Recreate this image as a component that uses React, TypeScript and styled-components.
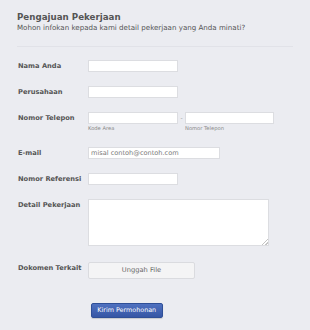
import styled, { createGlobalStyle } from "styled-components";

const GlobalStyle = createGlobalStyle`
  body {
    margin: 0;
    background: #ebecf1;
    font-family: "DejaVu Sans", Verdana, sans-serif;
  }
`;

const Page = styled.div`
  width: 310px;
  height: 330px;
  overflow: hidden;
  background: #ebecf1;
`;

const Header = styled.div`
  margin: 0 17px;
  padding-top: 11px;
  padding-bottom: 13px;
  border-bottom: 1px solid #e1e2e8;
`;

const Title = styled.h1`
  margin: 0;
  font-size: 8.7px;
  line-height: 12px;
  font-weight: bold;
  color: #555;
`;

const Subtitle = styled.p`
  margin: 0;
  font-size: 7.1px;
  line-height: 10px;
  color: #555;
`;

const Form = styled.form`
  padding: 13px 0 0 18px;
`;

const Row = styled.div<{ $space?: number }>`
  display: flex;
  align-items: flex-start;
  margin-bottom: ${({ $space }) => $space ?? 14}px;
`;

const Label = styled.label`
  width: 70px;
  flex-shrink: 0;
  font-size: 6.7px;
  line-height: 12px;
  font-weight: bold;
  color: #555;
`;

const Input = styled.input<{ $width?: number }>`
  box-sizing: border-box;
  width: ${({ $width }) => $width ?? 90}px;
  height: 12px;
  margin: 0;
  padding: 0 2px;
  border: 1px solid #dcdde1;
  background: #fff;
  font-family: inherit;
  font-size: 6.6px;
  color: #555;
  outline: none;

  &::placeholder {
    color: #7a7a7a;
  }
`;

const PhoneGroup = styled.div`
  display: flex;
  align-items: flex-start;
`;

const PhoneField = styled.div`
  display: flex;
  flex-direction: column;
`;

const Dash = styled.span`
  width: 7px;
  text-align: center;
  font-size: 6px;
  line-height: 12px;
  color: #999;
`;

const SubLabel = styled.span`
  margin-top: 1px;
  font-size: 5.2px;
  line-height: 7px;
  color: #888;
`;

const TextArea = styled.textarea`
  box-sizing: border-box;
  width: 181px;
  height: 47px;
  margin: 0;
  padding: 2px;
  border: 1px solid #dcdde1;
  background: #fff;
  font-family: inherit;
  font-size: 6.6px;
  outline: none;

  &::-webkit-resizer {
    background: linear-gradient(
      135deg,
      transparent 78%,
      #c4c4c4 78%,
      #c4c4c4 83%,
      transparent 83%,
      transparent 89%,
      #c4c4c4 89%,
      #c4c4c4 94%,
      transparent 94%
    );
  }
`;

const UploadButton = styled.button`
  box-sizing: border-box;
  width: 107px;
  height: 16.5px;
  margin: 0;
  padding: 0;
  border: 1px solid #dadbdf;
  border-radius: 2px;
  background: #f4f4f5;
  font-family: inherit;
  font-size: 6.7px;
  color: #666;
`;

const SubmitRow = styled.div`
  display: flex;
  padding-left: 73px;
`;

const SubmitButton = styled.button`
  box-sizing: border-box;
  width: 71.5px;
  height: 14.5px;
  margin: 0;
  padding: 0;
  border: 1px solid #2f4f97;
  border-radius: 2px;
  background: linear-gradient(#4f71c0, #3656a5);
  box-shadow: 0 1px 1px rgba(0, 0, 0, 0.15);
  font-family: inherit;
  font-size: 6.4px;
  color: #fff;
`;

export default function App() {
  return (
    <Page>
      <GlobalStyle />
      <Header>
        <Title>Pengajuan Pekerjaan</Title>
        <Subtitle>Mohon infokan kepada kami detail pekerjaan yang Anda minati?</Subtitle>
      </Header>

      <Form onSubmit={(e) => e.preventDefault()}>
        <Row>
          <Label>Nama Anda</Label>
          <Input type="text" />
        </Row>
        <Row>
          <Label>Perusahaan</Label>
          <Input type="text" />
        </Row>
        <Row $space={15}>
          <Label>Nomor Telepon</Label>
          <PhoneGroup>
            <PhoneField>
              <Input type="text" />
              <SubLabel>Kode Area</SubLabel>
            </PhoneField>
            <Dash>-</Dash>
            <PhoneField>
              <Input type="text" $width={89} />
              <SubLabel>Nomor Telepon</SubLabel>
            </PhoneField>
          </PhoneGroup>
        </Row>
        <Row>
          <Label>E-mail</Label>
          <Input type="text" $width={132} placeholder="misal contoh@contoh.com" />
        </Row>
        <Row>
          <Label>Nomor Referensi</Label>
          <Input type="text" />
        </Row>
        <Row $space={16}>
          <Label>Detail Pekerjaan</Label>
          <TextArea />
        </Row>
        <Row $space={24.5}>
          <Label>Dokomen Terkait</Label>
          <UploadButton type="button">Unggah File</UploadButton>
        </Row>
        <SubmitRow>
          <SubmitButton type="submit">Kirim Permohonan</SubmitButton>
        </SubmitRow>
      </Form>
    </Page>
  );
}
